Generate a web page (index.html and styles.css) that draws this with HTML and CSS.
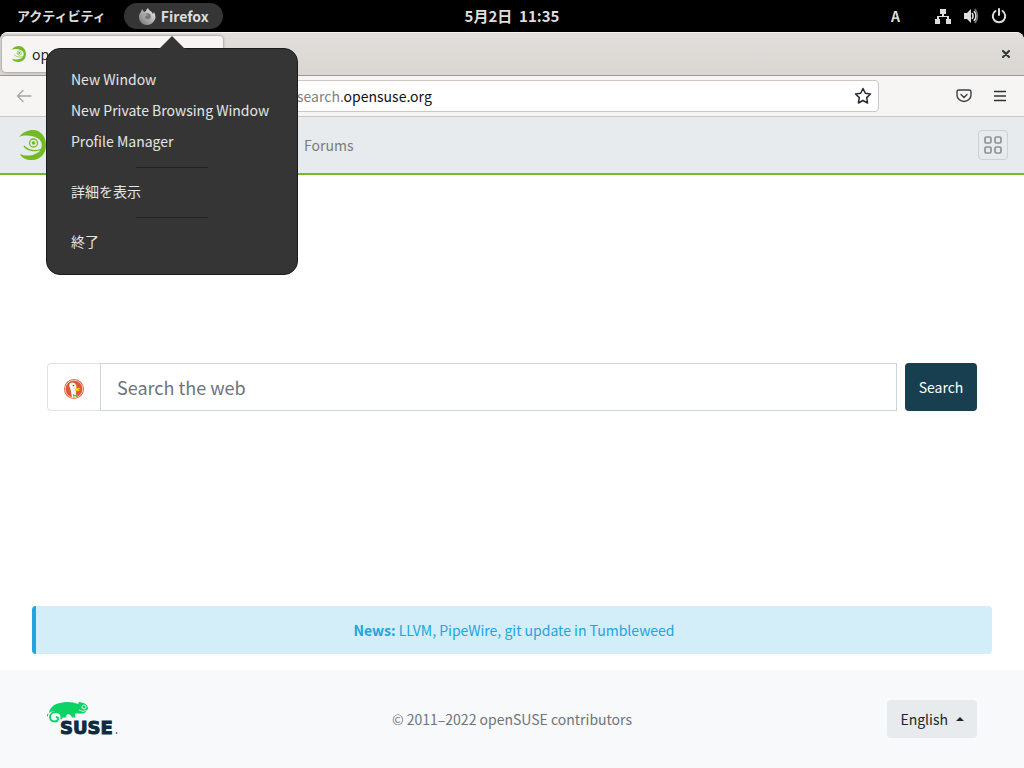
FILE: index.html
```html
<!DOCTYPE html>
<html lang="ja">
<head>
<meta charset="utf-8">
<title>openSUSE Search</title>
<meta name="viewport" content="width=device-width, initial-scale=1">
<link rel="stylesheet" href="styles.css">
</head>
<body>
<svg class="defs" aria-hidden="true">
  <symbol id="gecko" viewBox="0 0 30 30">
    <path d="M1 7C5 2 10 0 15 0c8 0 13 7 13 15S23 30 14 30C8 30 4 28 2 24c5 2 11 2 15 0 3-1 5-3 6-5 2-5 0-9-4-11C13 5 6 5 1 7z" fill="#73ba25"/>
    <circle cx="15.500" cy="13" r="4" fill="none" stroke="#73ba25" stroke-width="1.300"/>
    <circle cx="15.500" cy="13" r="1.800" fill="#73ba25"/>
    <path d="M6 16c4 5 12 6 18 3" fill="none" stroke="#73ba25" stroke-width="1.300"/>
  </symbol>
</svg>

<header class="shell">
  <button class="shell-item" type="button">アクティビティ</button>
  <button class="shell-app" type="button" aria-expanded="true">
    <svg width="17" height="17" viewBox="0 0 17 17" aria-hidden="true">
      <defs><linearGradient id="fox" x1="1" y1="0" x2="0" y2="1"><stop offset="0" stop-color="#f4f4f4"/><stop offset=".55" stop-color="#aaa"/><stop offset="1" stop-color="#707070"/></linearGradient></defs>
      <path d="M3 1l2 3 2-1c0-1 1-2 2-3 1 3 4 3 5 6l1-2c2 4 2 7 0 9-2 3-5 4-7 4-5 0-8-4-8-8 0-3 1-4 2-5z" fill="url(#fox)"/>
      <circle cx="8.500" cy="8.500" r="3.200" fill="#777"/>
      <path d="M3 6c2-1 5 0 6 1-1 1-3 1-3 2 0 2 3 3 5 1-1 4-7 3-8-1z" fill="#a2a2a2"/>
    </svg>
    Firefox
  </button>
  <time class="shell-clock">5月2日&nbsp; 11:35</time>
  <div class="shell-status">
    <span class="shell-input">A</span>
    <svg width="16" height="16" viewBox="0 0 16 16" fill="#dedede" aria-label="Network"><path d="M5 1h6v5H9v2h5v3h2v5h-5v-5h1V9H4v2h1v5H0v-5h2V8h5V6H5z"/></svg>
    <svg width="16" height="16" viewBox="0 0 16 16" aria-label="Volume"><path d="M1 5h3l4-4v14l-4-4H1z" fill="#dedede"/><path d="M9 5q2 3 0 6M11 3q4 5 0 10" fill="none" stroke="#dedede" stroke-width="1.600"/><path d="M12 1q5 7 0 14" fill="none" stroke="#777" stroke-width="1.500"/></svg>
    <svg width="16" height="16" viewBox="0 0 16 16" fill="none" stroke="#dedede" stroke-width="2" stroke-linecap="round" aria-label="Power"><path d="M8 1v6M4.500 3a6.200 6.200 0 1 0 7 0"/></svg>
  </div>

  <nav class="menu" aria-label="Firefox">
    <svg class="menu-arrow" width="26" height="13" viewBox="0 0 26 13" aria-hidden="true"><path d="M0 13L13 0l13 13z" fill="#353535"/></svg>
    <button type="button">New Window</button>
    <button type="button">New Private Browsing Window</button>
    <button type="button">Profile Manager</button>
    <hr>
    <button type="button">詳細を表示</button>
    <hr>
    <button type="button">終了</button>
  </nav>
</header>

<div class="window">
  <div class="tabs">
    <div class="tab"><svg width="16" height="16" aria-hidden="true"><use href="#gecko"/></svg><span>openSUSE Search</span></div>
    <button class="close" type="button" aria-label="Close"><svg width="8" height="8" viewBox="0 0 8 8"><path d="M1 1l6 6M7 1L1 7" stroke="#2e3436" stroke-width="2" stroke-linecap="round"/></svg></button>
  </div>
  <div class="toolbar">
    <button class="back" type="button" aria-label="Back"><svg width="16" height="14" viewBox="0 0 16 14" fill="none" stroke="#a5a5a5" stroke-width="1.400" stroke-linecap="round" stroke-linejoin="round"><path d="M7 1.500L1.500 7 7 12.500M1.500 7H15"/></svg></button>
    <div class="address">
      <span class="url">search.<b>opensuse.org</b></span>
      <button type="button" aria-label="Bookmark"><svg width="18" height="18" viewBox="0 0 18 18" fill="none" stroke="#2b2a33" stroke-width="1.500" stroke-linejoin="round"><path d="M9 1.500l2.300 4.800 5.200.7-3.800 3.600.9 5.400L9 13.500 4.400 16l.9-5.400L1.500 7l5.200-.7z"/></svg></button>
    </div>
    <div class="tools">
      <button type="button" aria-label="Pocket"><svg width="16" height="16" viewBox="0 0 16 16" fill="none" stroke="#3b3f42" stroke-width="1.400" stroke-linecap="round" stroke-linejoin="round"><path d="M3 2h10q2 0 2 2v3a7 6.500 0 0 1-14 0V4q0-2 2-2zM5 6.500l3 3 3-3"/></svg></button>
      <button type="button" aria-label="Menu"><svg width="16" height="16" viewBox="0 0 16 16" stroke="#2e3436" stroke-width="1.300"><path d="M2 3.500h12M2 8h12M2 12.500h12"/></svg></button>
    </div>
  </div>

  <nav class="navbar">
    <a class="brand" href="#" aria-label="openSUSE"><svg width="30" height="30"><use href="#gecko"/></svg></a>
    <a class="nav-link" href="#">Forums</a>
    <button class="grid-toggle" type="button" aria-label="Sites"><svg width="20" height="20" viewBox="0 0 20 20" fill="none" stroke="#8e9295" stroke-width="1.700"><rect x="2" y="2" width="6" height="6" rx="1.500"/><rect x="12" y="2" width="6" height="6" rx="1.500"/><rect x="2" y="12" width="6" height="6" rx="1.500"/><rect x="12" y="12" width="6" height="6" rx="1.500"/></svg></button>
  </nav>

  <main class="main">
    <div class="search-area">
      <form class="search">
        <button class="engine" type="button" aria-label="DuckDuckGo">
          <svg width="20" height="20" viewBox="0 0 20 20"><circle cx="10" cy="10" r="10" fill="#de5833"/><circle cx="10" cy="10" r="8.800" fill="none" stroke="#fff" stroke-width=".7"/><path d="M6 4c2-1 5-1 6 2 1 2 0 5 0 7l0 5q-2 .5-4 0C7 14 7 11 6 9 5 7 5 5 6 4z" fill="#f6f6f6"/><circle cx="9.500" cy="6.500" r=".8" fill="#2d4f8e"/><path d="M11 10q2-1.500 5.500-1L14 11l2 .5q-3 1-5 .3z" fill="#fdd20a"/><path d="M9 15l2 1 3-1v3l-3-.7-2 .5z" fill="#65bc46"/></svg>
        </button>
        <input type="text" aria-label="Search the web" placeholder="Search the web">
        <button class="submit" type="submit">Search</button>
      </form>
    </div>
    <a class="news" href="#"><strong>News:</strong> LLVM, PipeWire, git update in Tumbleweed</a>
  </main>

  <footer class="footer">
    <a class="suse" href="#" aria-label="SUSE">
      <svg width="72" height="36" viewBox="0 0 72 36">
        <path d="M2 13C2 7 7 3 13 2c7-2 13-1 18 1l1-2q1-.7 2 .4c4 .2 6 2 7 5.200 0 3-3 6-6 6-3 .5-5-.6-7 .4q-.500 2 1 3.500h-4c-1-3-3-4-5-3-1 1-.5 2-1 3h-5c0-3-3-6-7-6-4-.4-6 2-6 5-2 0-4-.5-4-2.500z" fill="#0cd366"/>
        <path d="M14 18c2-4-1-7-5-7-3.500 0-6 2-6 5s2 4.500 5 4.500 5-4 1-4.500" fill="none" stroke="#0cd366" stroke-width="1.900"/>
        <circle cx="37" cy="6" r="2" fill="#0cd366" stroke="#f8f9fa" stroke-width=".9"/>
        <path d="M32 9q4 2.500 8 .5" fill="none" stroke="#f8f9fa" stroke-width=".8"/>
        <text class="suse-word" x="13" y="33">SUSE</text>
        <circle cx="69.500" cy="32" r=".8" fill="#0c2c40"/>
      </svg>
    </a>
    <p class="copyright">© 2011–2022 openSUSE contributors</p>
    <button class="language" type="button">English <span class="caret"></span></button>
  </footer>
</div>
</body>
</html>
```
FILE: styles.css
```css
* { box-sizing: border-box; }

body {
  margin: 0;
  min-height: 100vh;
  display: flex;
  flex-direction: column;
  background: #000;
  color: #212529;
  font: 14px/24px "Noto Sans CJK JP", "Noto Sans", sans-serif;
}

button {
  display: flex;
  align-items: center;
  justify-content: center;
  margin: 0;
  padding: 0;
  border: 0;
  background: none;
  color: inherit;
  font: inherit;
}

a { color: inherit; text-decoration: none; }
svg { display: block; flex: none; }
.defs { position: absolute; width: 0; height: 0; }

.shell {
  position: relative;
  display: grid;
  grid-template-columns: auto auto 1fr auto;
  align-items: center;
  height: 32px;
  padding: 0 17px;
  color: #dedede;
  font-weight: 700;
}

.shell-item { font-size: 13px; }

.shell-app {
  gap: 5px;
  height: 26px;
  margin-left: 18px;
  padding: 0 14px 0 15px;
  border-radius: 13px;
  background: #353535;
}

.shell-clock {
  position: absolute;
  left: 0;
  right: 0;
  font-size: 15px;
  text-align: center;
  pointer-events: none;
}

.shell-status {
  grid-column: 4;
  display: flex;
  align-items: center;
  gap: 12px;
}

.shell-input { margin-right: 23px; }

.menu {
  position: absolute;
  z-index: 2;
  top: 48px;
  left: 46px;
  width: 252px;
  padding: 16px 0;
  border: 1px solid #1b1b1b;
  border-radius: 14px;
  background: #353535;
  color: #e6e6e6;
  font-weight: 400;
}

.menu-arrow {
  position: absolute;
  top: -13px;
  left: 112px;
}

.menu button {
  justify-content: flex-start;
  width: 100%;
  height: 31px;
  padding: 0 24px 3px;
}

.menu hr {
  width: 72px;
  height: 1px;
  margin: 9px auto;
  border: 0;
  background: #222;
}

.window {
  flex: 1;
  display: flex;
  flex-direction: column;
  overflow: hidden;
  border-radius: 8px 8px 0 0;
  background: #fff;
}

.tabs {
  display: flex;
  align-items: center;
  justify-content: space-between;
  height: 44px;
  padding: 0 13px 0 2px;
  border-top: 1px solid #f5f4f3;
  border-bottom: 1px solid #9b9794;
  background: linear-gradient(#e1dedb, #dad6d2);
}

.tab {
  display: flex;
  align-items: center;
  gap: 5px;
  width: 221px;
  height: 36px;
  padding: 0 9px;
  border-radius: 4px;
  background: #f6f5f4;
  box-shadow: 0 0 3px #777;
}

.close { width: 10px; height: 24px; }

.toolbar {
  display: flex;
  align-items: center;
  height: 41px;
  padding: 0 16px;
  border-bottom: 1px solid #cdc7c2;
  background: #f6f5f4;
}

.address {
  flex: 1;
  display: flex;
  align-items: center;
  justify-content: space-between;
  height: 32px;
  margin: 0 77px 0 112px;
  padding: 0 6px 0 152px;
  border: 1px solid #cdc7c2;
  border-radius: 4px;
  background: #fff;
  color: #808080;
}

.url b { color: #111; font-weight: 400; }
.tools { display: flex; gap: 20px; }

.navbar {
  display: flex;
  align-items: center;
  height: 58px;
  padding: 0 16px 0 18px;
  border-bottom: 2px solid #73ba25;
  background: #e7ebee;
}

.nav-link { margin-left: 256px; color: #797c7e; }

.grid-toggle {
  width: 30px;
  height: 30px;
  margin-left: auto;
  border: 1px solid #cdd1d4;
  border-radius: 4px;
}

.main { flex: 1; display: flex; flex-direction: column; }

.search-area {
  flex: 1;
  display: flex;
  align-items: center;
  padding: 0 47px;
}

.search { flex: 1; display: flex; height: 48px; }

.engine {
  width: 54px;
  padding-top: 4px;
  border: 1px solid #dee2e6;
  border-radius: 4px 0 0 4px;
}

.search input {
  flex: 1;
  min-width: 0;
  margin: 0 8px 0 -1px;
  padding: 0 16px;
  border: 1px solid #ced4da;
  border-radius: 0;
  background: #fff;
  color: #495057;
  font: inherit;
  font-size: 18px;
}

.search input::placeholder { color: #6c757d; opacity: 1; }

.submit {
  width: 72px;
  border-radius: 4px;
  background: #173f4f;
  color: #fff;
}

.news {
  margin: 7px 32px 16px;
  padding: 12px;
  border-left: 4px solid #21a4df;
  border-radius: 4px;
  background: #d3edf9;
  color: #21a4df;
  text-align: center;
}

.footer {
  display: grid;
  grid-template-columns: 1fr auto 1fr;
  align-items: center;
  height: 98px;
  padding: 0 47px;
  background: #f8f9fa;
}

.suse { width: 72px; }

.suse-word {
  fill: #0c2c40;
  stroke: #0c2c40;
  stroke-width: 1px;
  font: 700 18px "DejaVu Sans", sans-serif;
}

.copyright { margin: 0; color: #6c757d; }

.language {
  justify-self: end;
  gap: 8px;
  height: 38px;
  padding: 0 13px;
  border-radius: 4px;
  background: #e7ebee;
}

.caret {
  border: 4px solid transparent;
  border-top: 0;
  border-bottom-color: #212529;
}
```
